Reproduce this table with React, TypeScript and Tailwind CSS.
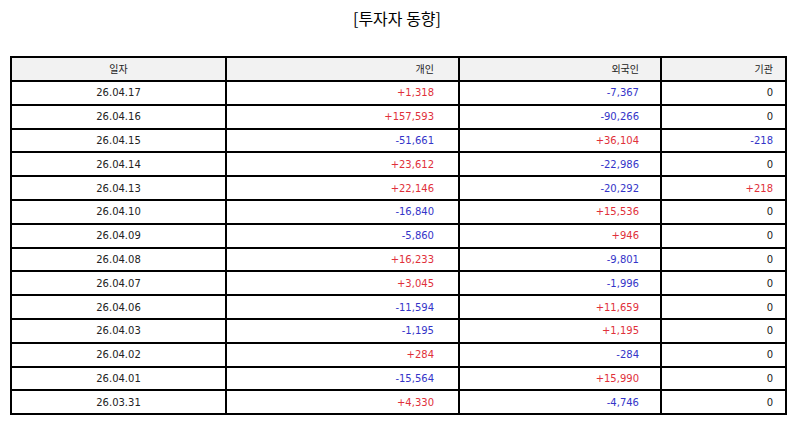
const ROWS: [string, string, string, string][] = [
  ["26.04.17", "+1,318", "-7,367", "0"],
  ["26.04.16", "+157,593", "-90,266", "0"],
  ["26.04.15", "-51,661", "+36,104", "-218"],
  ["26.04.14", "+23,612", "-22,986", "0"],
  ["26.04.13", "+22,146", "-20,292", "+218"],
  ["26.04.10", "-16,840", "+15,536", "0"],
  ["26.04.09", "-5,860", "+946", "0"],
  ["26.04.08", "+16,233", "-9,801", "0"],
  ["26.04.07", "+3,045", "-1,996", "0"],
  ["26.04.06", "-11,594", "+11,659", "0"],
  ["26.04.03", "-1,195", "+1,195", "0"],
  ["26.04.02", "+284", "-284", "0"],
  ["26.04.01", "-15,564", "+15,990", "0"],
  ["26.03.31", "+4,330", "-4,746", "0"],
];

// sign decides the colour: up red, down blue, flat dark
function tone(v: string) {
  if (v.startsWith("+")) return "text-[#e0303a]";
  if (v.startsWith("-")) return "text-[#3434c8]";
  return "text-[#1a1a1a]";
}

export default function App() {
  return (
    <div
      className="w-[794px] h-[425px] bg-white text-[#222] overflow-hidden"
      style={{ fontFamily: '"DejaVu Sans", "Noto Sans CJK KR", sans-serif' }}
    >
      <h1
        className="h-[37px] pt-[6px] text-center text-[16px] leading-[24px] text-black"
        style={{ fontFamily: '"Noto Sans CJK KR", sans-serif' }}
      >
        [투자자 동향]
      </h1>
      <div className="pt-[19px] pl-[10px]">
        <table className="w-[775px] border-collapse table-fixed text-[10px]">
          <colgroup>
            <col className="w-[215px]" />
            <col className="w-[233px]" />
            <col className="w-[202px]" />
            <col className="w-[125px]" />
          </colgroup>
          <thead>
            <tr className="h-[24px] bg-[#f2f2f2] text-[#222]">
              <th className="border-2 border-black font-normal text-center">일자</th>
              <th className="border-2 border-black font-normal text-right pr-[24px]">개인</th>
              <th className="border-2 border-black font-normal text-right pr-[21px]">외국인</th>
              <th className="border-2 border-black font-normal text-right pr-[12px]">기관</th>
            </tr>
          </thead>
          <tbody>
            {ROWS.map(([d, a, b, c]) => (
              <tr key={d} className="h-[23.8px]">
                <td className="border-2 border-black text-center text-[#222]">{d}</td>
                <td className={`border-2 border-black text-right pr-[24px] ${tone(a)}`}>{a}</td>
                <td className={`border-2 border-black text-right pr-[21px] ${tone(b)}`}>{b}</td>
                <td className={`border-2 border-black text-right pr-[12px] ${tone(c)}`}>{c}</td>
              </tr>
            ))}
          </tbody>
        </table>
      </div>
    </div>
  );
}
